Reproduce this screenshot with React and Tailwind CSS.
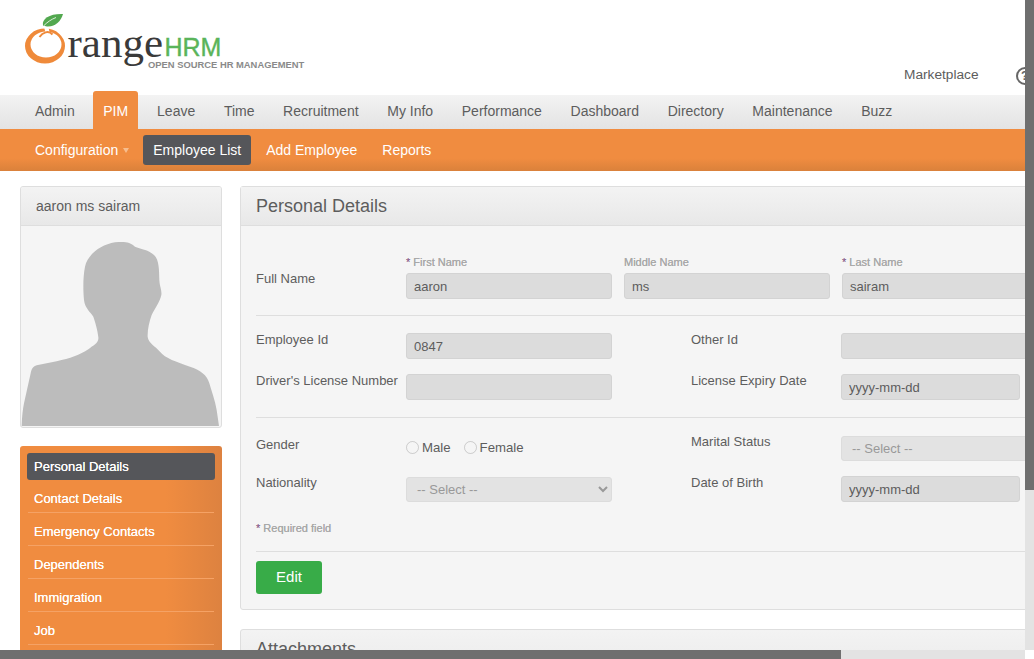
import React from 'react';

const topMenu = ['Admin', 'PIM', 'Leave', 'Time', 'Recruitment', 'My Info', 'Performance', 'Dashboard', 'Directory', 'Maintenance', 'Buzz'];
const sideMenu = ['Contact Details', 'Emergency Contacts', 'Dependents', 'Immigration', 'Job'];

const inputClass = 'h-[26px] rounded-[3px] border border-[#d3d3d3] bg-[#dcdcdc] px-[7px] text-[13px] text-[#5d5d5d] outline-none';
const selectClass = 'h-[25px] w-[206px] rounded-[3px] border border-[#dcdcdc] bg-[#e3e3e3] pl-[6px] text-[13px] text-[#999] outline-none';

function Logo() {
	return (
		<svg width="310" height="80" viewBox="0 0 310 80" className="block">
			<path
				fillRule="evenodd"
				d="M25 46a20 17.500 0 1 0 40 0a20 17.500 0 1 0-40 0zM30.500 44.500a15.500 13 0 1 1 31 0a15.500 13 0 1 1-31 0z"
				fill="#ef8a3a"
			/>
			<path d="M44 27l4.500 0l1 5.500l-4 0z" fill="#ffffff" />
			<path d="M39.500 37c3-4.500 9-7 13-2.500" fill="none" stroke="#ef8a3a" strokeWidth="2" />
			<path d="M43 25.500C41.500 18.500 50 13.500 63 14C61 21 55.500 27 47 26.500Z" fill="#52a84f" />
			<path d="M44 25.500C47.500 22 51 19.500 56 17.500" fill="none" stroke="#ffffff" strokeWidth="0.800" />
			<text x="67.500" y="57" fontFamily="'Liberation Serif', serif" fontSize="43" fill="#3a3a3a">range</text>
			<text x="164.500" y="56" fontFamily="'Liberation Sans', sans-serif" fontSize="25" fill="#5ab45a" stroke="#5ab45a" strokeWidth="0.400">HRM</text>
			<text x="148" y="68" fontFamily="'Liberation Sans', sans-serif" fontSize="9.380" fontWeight="700" fill="#8a8a8a">OPEN SOURCE HR MANAGEMENT</text>
		</svg>
	);
}

function Silhouette() {
	return (
		<svg viewBox="63 138 600 603" className="block h-[201px] w-[200px]">
			<path
				d="M65 738 C66 710 68 690 72 670 L92 580 C95 565 100 560 110 556 L170 544 C210 535 240 525 265 508 C280 495 297 490 295 472 C293 450 285 425 280 410 C270 395 255 385 252 360 C249 330 249 290 255 260 C262 225 300 195 345 187 C375 184 390 186 405 200 C420 207 445 208 462 225 C478 240 477 270 478 300 C479 320 486 330 484 345 C480 365 465 385 455 405 C448 425 442 450 443 470 C445 490 465 497 480 515 C495 535 530 545 570 560 C600 570 622 585 628 610 C635 635 645 660 650 690 L657 738 Z"
				fill="#bcbcbc"
			/>
		</svg>
	);
}

function Divider({ className }) {
	return <div className={`h-px w-[900px] bg-[#dedede] ${className}`} />;
}

function Label({ children, className = '' }) {
	return <div className={`w-[150px] shrink-0 whitespace-nowrap text-[13px] leading-4 text-[#5d5d5d] ${className}`}>{children}</div>;
}

function SubLabel({ required, children }) {
	return (
		<div className="mb-[4px] h-[14px] text-[11px] leading-[14px] text-[#a8a8a8] [text-shadow:0_0_0.5px_#a8a8a8]">
			{required && <span className="text-[#8e5a8e]">* </span>}
			{children}
		</div>
	);
}

export default function App() {
	return (
		<div className="flex h-[659px] w-[1034px] flex-col overflow-hidden bg-white font-['Liberation_Sans',Arial,sans-serif]">
			<div className="flex h-[650px] shrink-0">
				<div className="w-[1025px] shrink-0 overflow-hidden">
					<div className="w-[1070px]">
						{/* header */}
						<div className="flex h-[95px]">
							<Logo />
							<div className="ml-[594px] flex h-full items-start pt-[67px]">
								<span className="text-[13.700px] leading-4 text-[#5d5d5d]">Marketplace</span>
								<span className="ml-[37px] flex h-[18px] w-[18px] items-center justify-center rounded-full border-2 border-[#666] text-[12px] font-bold text-[#666]">?</span>
							</div>
						</div>

						{/* main menu */}
						<div className="flex h-[34px] bg-[linear-gradient(#f3f3f3,#e3e3e3)] pl-[25px]">
							<div className="flex h-[34px] items-center px-2.5 pb-px text-[14px] text-[#5d5d5d]">{topMenu[0]}</div>
							<div className="-mt-[4px] ml-[8.500px] flex h-[38px] items-center rounded-t-[3px] bg-[#f08c40] px-2.5 pt-[3px] text-[14px] text-white">{topMenu[1]}</div>
							<div className="ml-[9px] flex gap-[8.650px]">
								{topMenu.slice(2).map((item) => (
									<div key={item} className="flex h-[34px] items-center px-2.5 pb-px text-[14px] text-[#5d5d5d]">
										{item}
									</div>
								))}
							</div>
						</div>

						{/* sub menu */}
						<div className="flex h-[42px] items-start bg-[linear-gradient(#f08c40_0%,#f08c40_70%,#da813b_100%)] pl-[25px] pt-[6px]">
							<div className="flex h-[30px] items-center px-2.5 text-[14px] text-white">
								Configuration
								<span className="ml-[5px] h-0 w-0 border-x-[3.500px] border-t-[5px] border-x-transparent border-t-[#f7bd8d]" />
							</div>
							<div className="ml-[4px] flex h-[30px] items-center rounded-[3px] bg-[#55565a] px-2.5 text-[14px] text-white">Employee List</div>
							<div className="ml-[5px] flex h-[30px] items-center px-2.5 text-[14px] text-white">Add Employee</div>
							<div className="ml-[5px] flex h-[30px] items-center px-2.5 text-[14px] text-white">Reports</div>
						</div>

						<div className="flex gap-[18px] pl-5 pt-[15px]">
							{/* left column */}
							<div className="w-[202px] shrink-0">
								<div className="overflow-hidden rounded-[3px] border border-[#dedede] bg-[#f5f5f5]">
									<div className="flex h-[39px] items-center border-b border-[#dedede] bg-[linear-gradient(#f3f3f3,#e8e8e8)] px-[15px] text-[14px] text-[#5d5d5d]">aaron ms sairam</div>
									<Silhouette />
								</div>
								<div className="mt-[18px] h-[220px] rounded-t-[3px] bg-[linear-gradient(90deg,#f08c40_0%,#f08c40_72%,#dd8240_100%)] p-[7px] pb-0">
									<div className="flex h-[27px] items-center rounded-[3px] bg-[#55565a] px-[7px] text-[13px] text-white [text-shadow:0_0_0.5px_#ffffff]">Personal Details</div>
									{sideMenu.map((item) => (
										<div key={item} className="mx-px flex h-[33px] items-center border-b border-[#f5a265] px-[6px] pt-[5px] text-[13px] text-white [text-shadow:0_0_0.5px_#ffffff]">
											{item}
										</div>
									))}
								</div>
							</div>

							{/* right column */}
							<div className="flex-1">
								<div className="h-[424px] rounded-[3px] border border-[#dedede] bg-[#f5f5f5]">
									<div className="flex h-[39px] items-center border-b border-[#dedede] bg-[linear-gradient(#f3f3f3,#e8e8e8)] px-[15px] text-[18px] text-[#5d5d5d]">Personal Details</div>

									<div className="pl-[15px] pt-[29px]">
										<div className="flex">
											<Label className="pt-[16px]">Full Name</Label>
											<div className="flex gap-3">
												<div>
													<SubLabel required>First Name</SubLabel>
													<input readOnly value="aaron" className={`${inputClass} w-[206px]`} />
												</div>
												<div>
													<SubLabel>Middle Name</SubLabel>
													<input readOnly value="ms" className={`${inputClass} w-[206px]`} />
												</div>
												<div>
													<SubLabel required>Last Name</SubLabel>
													<input readOnly value="sairam" className={`${inputClass} w-[206px]`} />
												</div>
											</div>
										</div>
										<Divider className="mt-4" />

										<div className="mt-[17px] flex">
											<Label className="-mt-px">Employee Id</Label>
											<input readOnly value="0847" className={`${inputClass} w-[206px]`} />
											<Label className="-mt-px ml-[79px]">Other Id</Label>
											<input readOnly value="" className={`${inputClass} w-[206px]`} />
										</div>
										<div className="mt-[15px] flex">
											<Label className="-mt-px">Driver's License Number</Label>
											<input readOnly value="" className={`${inputClass} w-[206px]`} />
											<Label className="-mt-px ml-[79px]">License Expiry Date</Label>
											<input readOnly value="yyyy-mm-dd" className={`${inputClass} w-[179px]`} />
										</div>
										<Divider className="mt-[17px]" />

										<div className="mt-[18px] flex">
											<Label className="pt-px">Gender</Label>
											<div className="-mt-px flex h-[25px] w-[206px] items-center text-[13.200px] text-[#5d5d5d]">
												<input type="radio" disabled className="m-0 h-[13px] w-[13px]" />
												<span className="ml-[3px]">Male</span>
												<input type="radio" disabled className="m-0 ml-[13px] h-[13px] w-[13px]" />
												<span className="ml-[3px]">Female</span>
											</div>
											<Label className="-mt-[2px] ml-[79px]">Marital Status</Label>
											<select disabled className={selectClass}>
												<option>-- Select --</option>
											</select>
										</div>
										<div className="mt-4 flex">
											<Label className="-mt-[2px]">Nationality</Label>
											<select disabled className={selectClass}>
												<option>-- Select --</option>
											</select>
											<Label className="-mt-[2px] ml-[79px]">Date of Birth</Label>
											<input readOnly value="yyyy-mm-dd" className={`${inputClass} -mt-px w-[179px]`} />
										</div>

										<div className="mt-[19px] text-[11px] leading-[14px] text-[#a8a8a8] [text-shadow:0_0_0.5px_#a8a8a8]">
											<span className="text-[#8e5a8e]">* </span>Required field
										</div>
										<Divider className="mt-4" />
										<div className="mt-[9px] flex h-[33px] w-[66px] items-center justify-center rounded-[3px] bg-[#38ac48] text-[15px] text-white">Edit</div>
									</div>
								</div>

								<div className="mt-[19px] h-[60px] rounded-[3px] border border-[#dedede] bg-[linear-gradient(#f3f3f3,#e8e8e8)] px-[15px] pt-[9px] text-[18px] leading-5 text-[#5d5d5d]">Attachments</div>
							</div>
						</div>
					</div>
				</div>

				{/* vertical scrollbar */}
				<div className="w-[9px] shrink-0 bg-[#e3e3e3]">
					<div className="h-[490px] bg-[#6f6f6f]" />
				</div>
			</div>

			{/* horizontal scrollbar */}
			<div className="flex h-[9px] shrink-0">
				<div className="w-[841px] bg-[#6f6f6f]" />
				<div className="w-[184px] bg-[#e3e3e3]" />
				<div className="flex-1 bg-white" />
			</div>
		</div>
	);
}
